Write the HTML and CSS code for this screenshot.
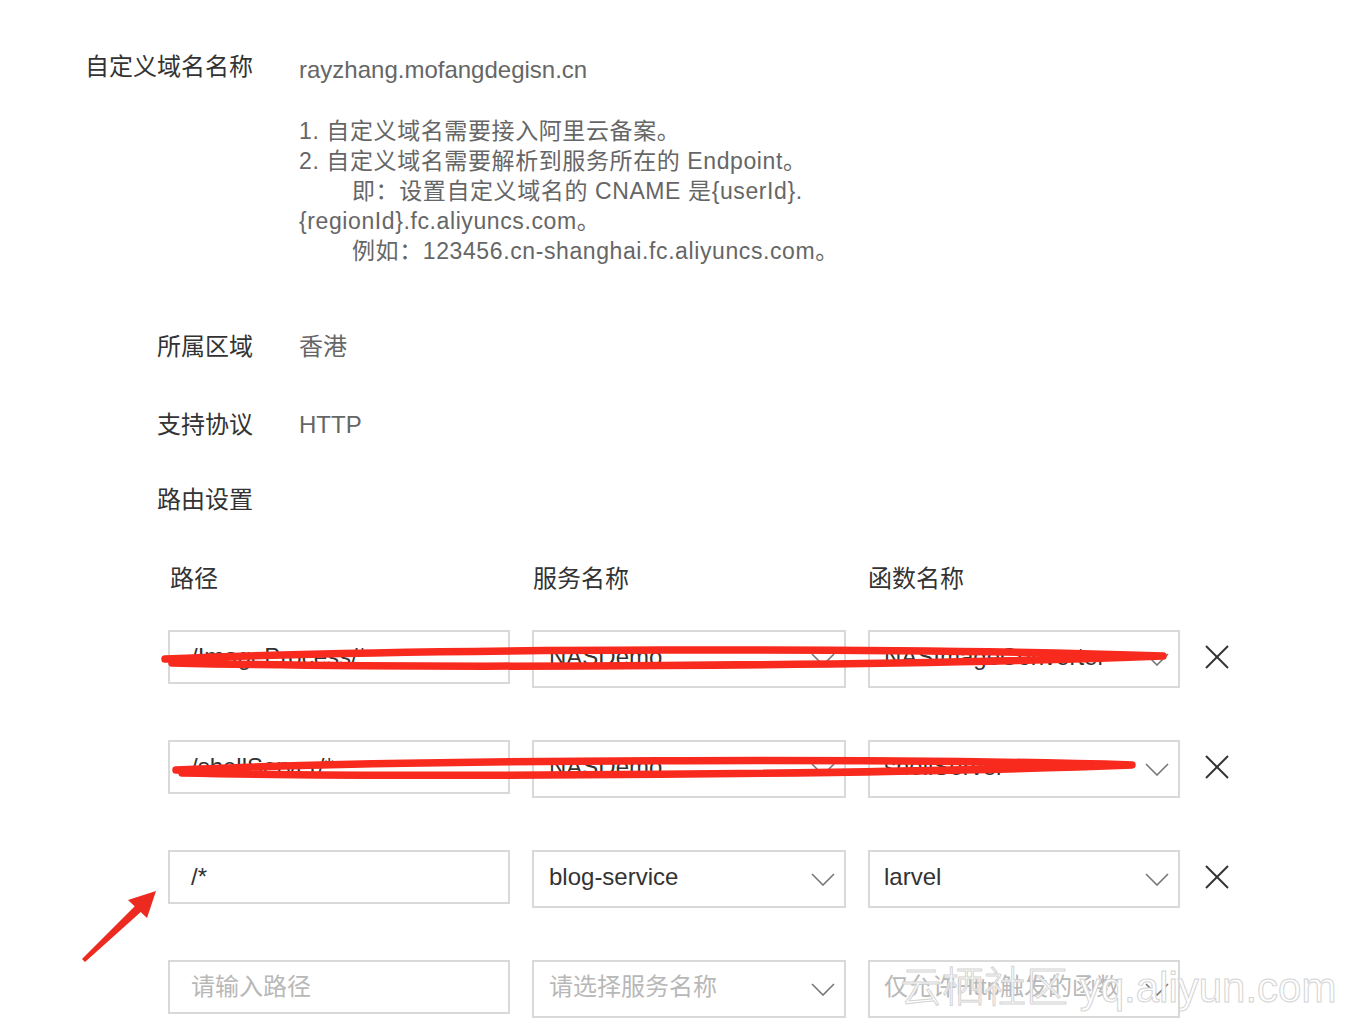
FILE: index.html
```html
<!DOCTYPE html>
<html lang="zh-CN">
<head>
  <meta charset="UTF-8" />
  <title>自定义域名</title>
  <link rel="stylesheet" href="styles.css">
</head>
<body>
  <div class="page">
    <div class="field">
      <div class="field-label">自定义域名名称</div>
      <div class="field-value domain">rayzhang.mofangdegisn.cn</div>
    </div>

    <div class="notes">
      <div>1. 自定义域名需要接入阿里云备案。</div>
      <div>2. 自定义域名需要解析到服务所在的 Endpoint。</div>
      <div class="indent">即：设置自定义域名的 CNAME 是{userId}.</div>
      <div>{regionId}.fc.aliyuncs.com。</div>
      <div class="indent">例如：123456.cn-shanghai.fc.aliyuncs.com。</div>
    </div>

    <div class="field field-region">
      <div class="field-label">所属区域</div>
      <div class="field-value">香港</div>
    </div>

    <div class="field field-gap">
      <div class="field-label">支持协议</div>
      <div class="field-value">HTTP</div>
    </div>

    <div class="field field-route">
      <div class="field-label">路由设置</div>
    </div>

    <div class="routes">
      <div class="route-head">
        <div>路径</div>
        <div>服务名称</div>
        <div>函数名称</div>
      </div>

      <div class="route-row">
        <div class="input">/ImageProcess/*</div>
        <div class="select service"><span>NASDemo</span><svg class="chevron" viewBox="0 0 24 13"><polyline points="1,1 12,12 23,1"/></svg></div>
        <div class="select func"><span>NASImageConverter</span><svg class="chevron" viewBox="0 0 24 13"><polyline points="1,1 12,12 23,1"/></svg></div>
        <div class="remove"><svg viewBox="0 0 24 24"><line x1="1" y1="1" x2="23" y2="23"/><line x1="23" y1="1" x2="1" y2="23"/></svg></div>
      </div>

      <div class="route-row">
        <div class="input">/shellServer/*</div>
        <div class="select service"><span>NASDemo</span><svg class="chevron" viewBox="0 0 24 13"><polyline points="1,1 12,12 23,1"/></svg></div>
        <div class="select func"><span>shellServer</span><svg class="chevron" viewBox="0 0 24 13"><polyline points="1,1 12,12 23,1"/></svg></div>
        <div class="remove"><svg viewBox="0 0 24 24"><line x1="1" y1="1" x2="23" y2="23"/><line x1="23" y1="1" x2="1" y2="23"/></svg></div>
      </div>

      <div class="route-row">
        <div class="input">/*</div>
        <div class="select service"><span>blog-service</span><svg class="chevron" viewBox="0 0 24 13"><polyline points="1,1 12,12 23,1"/></svg></div>
        <div class="select func"><span>larvel</span><svg class="chevron" viewBox="0 0 24 13"><polyline points="1,1 12,12 23,1"/></svg></div>
        <div class="remove"><svg viewBox="0 0 24 24"><line x1="1" y1="1" x2="23" y2="23"/><line x1="23" y1="1" x2="1" y2="23"/></svg></div>
      </div>

      <div class="route-row">
        <div class="input placeholder">请输入路径</div>
        <div class="select service placeholder"><span>请选择服务名称</span><svg class="chevron" viewBox="0 0 24 13"><polyline points="1,1 12,12 23,1"/></svg></div>
        <div class="select func placeholder"><span>仅允许Http触发的函数</span><svg class="chevron" viewBox="0 0 24 13"><polyline points="1,1 12,12 23,1"/></svg></div>
      </div>
    </div>

    <!-- hand-drawn marks over the screenshot -->
    <svg class="marks" viewBox="0 0 1356 1026">
      <path class="strike" d="M165 659 C 420 648, 900 647, 1163 656 C 900 666, 420 669, 172 663" />
      <path class="strike" d="M176 770 C 420 759, 900 758, 1132 765 C 900 774, 420 778, 182 773" />
      <polygon class="arrow-shaft" points="82,959 85,962 143,910 137,904" />
      <polygon class="arrow-head" points="156,891 147,918 128,900" />
    </svg>

    <div class="watermark">云栖社区 yq.aliyun.com</div>
  </div>
</body>
</html>
```

FILE: styles.css
```css
body {
  margin: 0;
  background-color: #fff;
  font-family: 'Liberation Sans', 'Noto Sans CJK SC', sans-serif;
  color: #333;
}

.page {
  position: relative;
  width: 1356px;
  height: 1026px;
  overflow: hidden;
  box-sizing: border-box;
  padding-top: 50px;
}

.field {
  display: flex;
  align-items: flex-start;
}

.field-label {
  width: 253px;
  text-align: right;
  font-size: 24px;
  line-height: 34px;
  color: #333;
}

.field-value {
  margin-left: 46px;
  font-size: 24px;
  line-height: 34px;
  color: #666;
}

.field-value.domain {
  margin-top: 3px;
  margin-bottom: -3px;
}

.notes {
  margin: 32px 0 0 299px;
  font-size: 23px;
  line-height: 30px;
  letter-spacing: 0.6px;
  color: #666;
}

.notes .indent {
  padding-left: 53px;
}

.field-region {
  margin-top: 64px;
}

.field-gap {
  margin-top: 44px;
}

.field-route {
  margin-top: 41px;
}

.routes {
  margin: 47px 0 0 168px;
}

.route-head,
.route-row {
  display: grid;
  grid-template-columns: 342px 314px 312px 60px;
  column-gap: 22px;
  align-items: start;
}

.route-head {
  font-size: 24px;
  line-height: 30px;
  color: #333;
}

.route-head div:first-child {
  padding-left: 2px;
}

.route-head div:nth-child(2) {
  padding-left: 1px;
}

.route-row {
  margin-top: 52px;
}

.route-head + .route-row {
  margin-top: 36px;
}

.input,
.select {
  box-sizing: border-box;
  border: 2px solid #d9d9d9;
  font-size: 24px;
  color: #333;
  white-space: nowrap;
  overflow: hidden;
}

.input {
  height: 54px;
  line-height: 50px;
  padding-left: 21px;
}

.select {
  height: 58px;
  display: flex;
  align-items: center;
  justify-content: space-between;
  padding: 0 9px 0 15px;
}

.select span {
  line-height: 30px;
  height: 30px;
  margin-top: -4px;
}

.select.func {
  padding-left: 14px;
}

.placeholder,
.placeholder span {
  color: #b8b8b8;
}

.chevron {
  width: 24px;
  height: 13px;
  flex: none;
}

.chevron polyline {
  fill: none;
  stroke: #777;
  stroke-width: 1.6;
}

.remove {
  margin: 15px 0 0 3px;
}

.remove svg {
  display: block;
  width: 24px;
  height: 24px;
}

.remove line {
  stroke: #333;
  stroke-width: 2;
}

.marks {
  position: absolute;
  left: 0;
  top: 0;
  width: 1356px;
  height: 1026px;
  pointer-events: none;
}

.strike {
  fill: none;
  stroke: #f8291d;
  stroke-width: 7.5;
  stroke-linecap: round;
  stroke-linejoin: round;
}

.arrow-shaft,
.arrow-head {
  fill: #ec2a1f;
}

.watermark {
  position: absolute;
  left: 900px;
  top: 963px;
  font-size: 42px;
  line-height: 50px;
  font-weight: 300;
  color: #fff;
  -webkit-text-stroke: 1px #d4d4d4;
  white-space: nowrap;
}
```
